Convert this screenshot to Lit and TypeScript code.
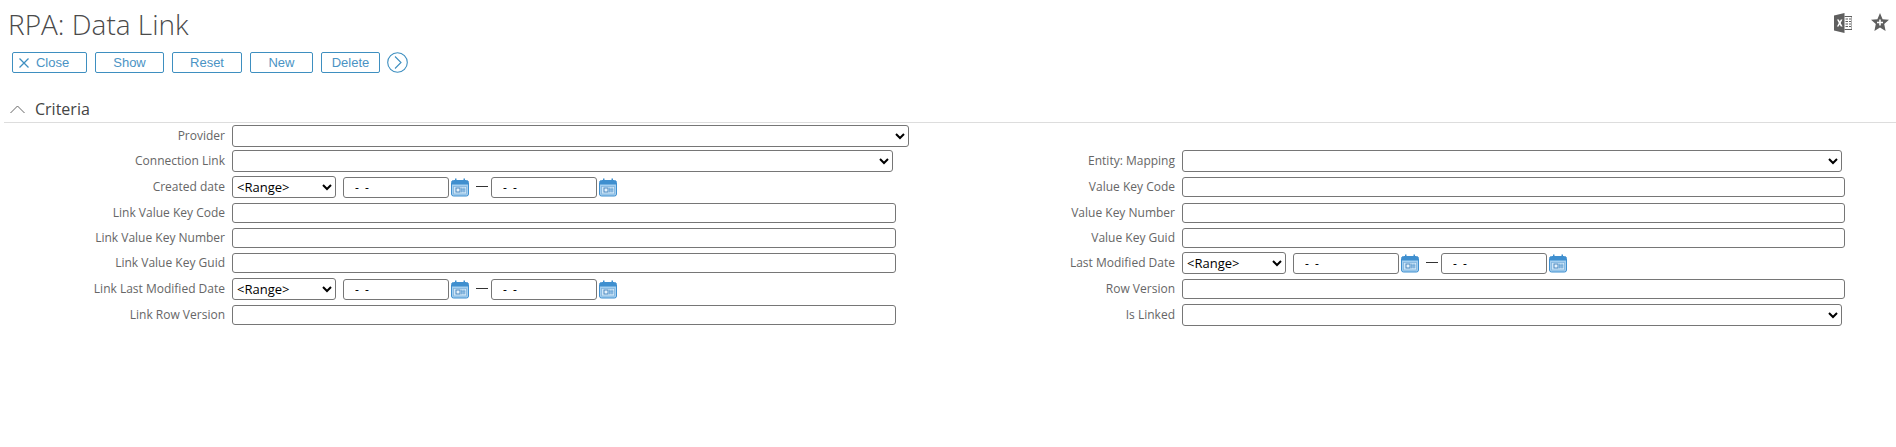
import { LitElement, html, css, svg } from 'lit';
import { customElement } from 'lit/decorators.js';

interface Field {
  label: string;
  type: 'text' | 'select' | 'range' | 'none';
  width?: number;
}

const buttons = [
  { label: 'Close', width: 75, close: true },
  { label: 'Show', width: 69 },
  { label: 'Reset', width: 70 },
  { label: 'New', width: 63 },
  { label: 'Delete', width: 59 },
];

// row by row, left column then right column
const rows: [Field, Field][] = [
  [{ label: 'Provider', type: 'select', width: 677 }, { label: '', type: 'none' }],
  [{ label: 'Connection Link', type: 'select', width: 661 }, { label: 'Entity: Mapping', type: 'select', width: 660 }],
  [{ label: 'Created date', type: 'range' }, { label: 'Value Key Code', type: 'text', width: 663 }],
  [{ label: 'Link Value Key Code', type: 'text', width: 664 }, { label: 'Value Key Number', type: 'text', width: 663 }],
  [{ label: 'Link Value Key Number', type: 'text', width: 664 }, { label: 'Value Key Guid', type: 'text', width: 663 }],
  [{ label: 'Link Value Key Guid', type: 'text', width: 664 }, { label: 'Last Modified Date', type: 'range' }],
  [{ label: 'Link Last Modified Date', type: 'range' }, { label: 'Row Version', type: 'text', width: 663 }],
  [{ label: 'Link Row Version', type: 'text', width: 664 }, { label: 'Is Linked', type: 'select', width: 660 }],
];

const calendar = svg`
  <rect x="0.5" y="2.5" width="17" height="15.5" rx="2" fill="#a6d0f0" stroke="#3f8fcf"/>
  <rect x="1" y="3" width="16" height="3.5" fill="#3f8fcf"/>
  <rect x="4" y="0.5" width="1.5" height="4" fill="#3f8fcf"/>
  <rect x="12.5" y="0.5" width="1.5" height="4" fill="#3f8fcf"/>
  <rect x="2.5" y="8.5" width="13" height="7.5" fill="#cfe6f7" stroke="#7fb3de" stroke-width="0.8"/>
  <rect x="5" y="10" width="4" height="4" fill="#e4f1fb" stroke="#3f80bb" stroke-width="0.9"/>
  <path d="M10.8 9.5v5M13 9.500v5M10 11.200h4.500M10 13h4.500" stroke="#5b9ad0" stroke-width="0.8"/>
`;

@customElement('app-root')
export class AppRoot extends LitElement {
  static styles = css`
    :host {
      display: block;
      height: 447px;
      background: #fff;
      font-family: 'Open Sans', sans-serif;
      color: #666;
      overflow: hidden;
    }

    .title-bar {
      display: flex;
      justify-content: space-between;
      padding: 5px 7px 0 8px;
      height: 52px;
      box-sizing: border-box;
    }

    h1 {
      margin: 0;
      font-size: 28px;
      line-height: 38px;
      font-weight: 300;
      color: #4a4a4a;
    }

    .page-icons {
      display: flex;
      gap: 19px;
      padding-top: 8px;
    }

    .toolbar {
      display: flex;
      align-items: center;
      gap: 8px;
      padding-left: 12px;
      height: 21px;
    }

    .btn {
      box-sizing: border-box;
      height: 21px;
      padding: 0;
      border: 1px solid #3e8fc0;
      border-radius: 2px;
      background: #fff;
      color: #4a93c4;
      font: 13px 'Liberation Sans', sans-serif;
      display: flex;
      align-items: center;
      justify-content: center;
      gap: 7px;
    }

    .btn.close {
      padding-right: 11px;
    }

    .more {
      margin-left: -1px;
      display: block;
    }

    .section-head {
      display: flex;
      align-items: center;
      gap: 10px;
      height: 26px;
      margin: 23px 0 0 4px;
      padding-left: 6px;
      border-bottom: 1px solid #ddd;
      font-size: 16px;
      color: #444;
    }

    .form {
      display: grid;
      grid-template-columns: 225px 725px 225px 1fr;
      grid-template-rows: 25px 26px 26px 25px 25px 26px 26px 26px;
      align-items: center;
    }

    .lbl {
      font-size: 12px;
      line-height: 16px;
      text-align: right;
      white-space: nowrap;
    }

    .ctl {
      display: flex;
      align-items: center;
      margin-left: 7px;
    }

    input,
    select {
      box-sizing: border-box;
      border: 1px solid #767676;
      border-radius: 3px;
      background: #fff;
      color: #000;
      font: 12px 'Open Sans', sans-serif;
      margin: 0;
    }

    input {
      height: 20px;
      padding: 0 2px;
    }

    select {
      height: 22px;
    }

    .range {
      width: 104px;
      margin-right: 7px;
      font-size: 13px;
    }

    .date {
      width: 106px;
      height: 21px;
      padding-left: 11px;
    }

    .cal {
      display: block;
      margin-left: 2px;
    }

    .dash {
      width: 12px;
      height: 1px;
      margin: 0 3px 2px 7px;
      background: #333;
    }
  `;

  private date() {
    return html`
      <input class="date" .value=${'-  -'} />
      <svg class="cal" width="18" height="19" viewBox="0 0 18 19">${calendar}</svg>
    `;
  }

  private control(f: Field) {
    if (f.type === 'none') return html`<div></div>`;
    if (f.type === 'range') {
      return html`<div class="ctl">
        <select class="range"><option>&lt;Range&gt;</option></select>
        ${this.date()}
        <span class="dash"></span>
        ${this.date()}
      </div>`;
    }
    if (f.type === 'select') {
      return html`<div class="ctl"><select style="width:${f.width}px"><option></option></select></div>`;
    }
    return html`<div class="ctl"><input type="text" style="width:${f.width}px" /></div>`;
  }

  render() {
    return html`
      <div class="title-bar">
        <h1>RPA: Data Link</h1>
        <div class="page-icons">
          <svg width="18" height="20" viewBox="0 0 18 20">
            <path d="M0 2.500 10.500 0v20L0 17.500z" fill="#5f5f5f"/>
            <path d="M3 6.500h1.800l1 2 1-2h1.700L6.700 10l1.900 3.500H6.800l-1.100-2.100-1.100 2.100H2.900L4.800 10z" fill="#fff"/>
            <path d="M10.500 3.500H18v13h-7.500" fill="none" stroke="#5f5f5f"/>
            <path d="M11.500 6h2.500M15 6h2M11.500 8.500h2.500M15 8.500h2M11.500 11h2.500M15 11h2M11.500 13.500h2.500M15 13.500h2" stroke="#5f5f5f" stroke-width="1.200"/>
          </svg>
          <svg width="18" height="19" viewBox="0 0 18 19">
            <path d="M9 0l2.600 6.200 6.400.6-4.800 4.300 1.400 6.900L9 14.500l-5.600 3.500 1.400-6.900L0 6.800l6.400-.6z" fill="#5f5f5f"/>
            <path d="M9 6.500v6M6 9.500h6" stroke="#fff" stroke-width="1.600"/>
          </svg>
        </div>
      </div>
      <div class="toolbar">
        ${buttons.map(
          (b) => html`<button class="btn ${b.close ? 'close' : ''}" style="width:${b.width}px">
            ${b.close
              ? html`<svg width="10" height="10" viewBox="0 0 10 10"><path d="M.5.5l9 9M9.500.5l-9 9" stroke="#3e8fc0" stroke-width="1.300"/></svg>`
              : ''}${b.label}
          </button>`
        )}
        <svg class="more" width="21" height="21" viewBox="0 0 21 21">
          <circle cx="10.500" cy="10.500" r="9.800" fill="none" stroke="#3e8fc0" stroke-width="1.100"/>
          <path d="M8 4.500l6 6-6 6" fill="none" stroke="#3e8fc0" stroke-width="1.100"/>
        </svg>
      </div>
      <div class="section-head">
        <svg width="15" height="9" viewBox="0 0 15 9"><path d="M.5 8 7.500 1l7 7" fill="none" stroke="#666"/></svg>
        <span>Criteria</span>
      </div>
      <div class="form">
        ${rows.map(
          ([l, r]) => html`
            <div class="lbl">${l.label}</div>
            ${this.control(l)}
            <div class="lbl">${r.label}</div>
            ${this.control(r)}
          `
        )}
      </div>
    `;
  }
}
